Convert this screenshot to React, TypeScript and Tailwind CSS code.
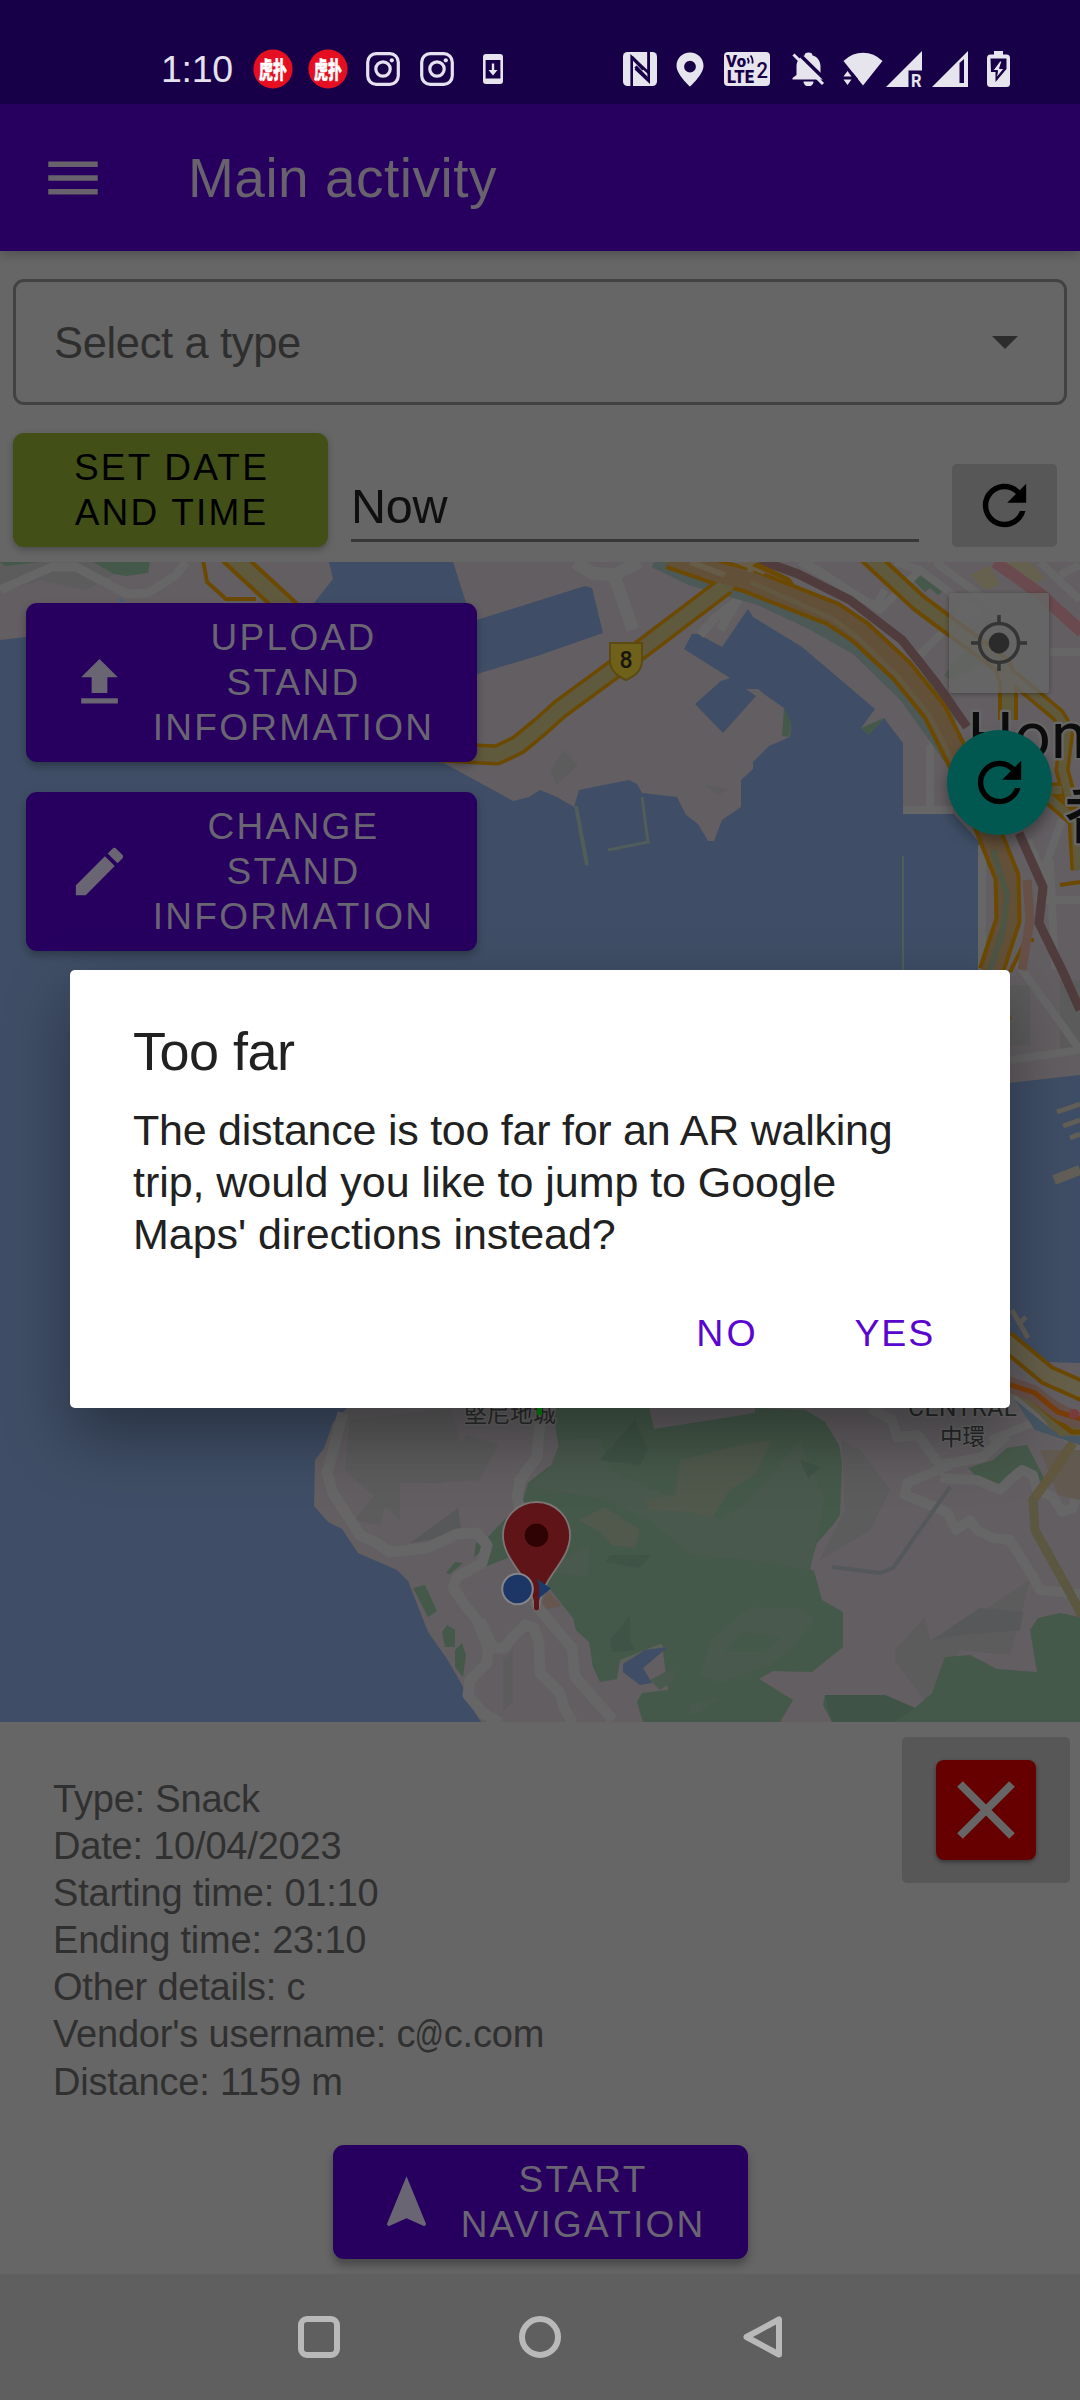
import React from "react";

const MATERIAL = {
  refresh:
    "M17.65 6.35C16.2 4.9 14.21 4 12 4c-4.42 0-7.99 3.58-7.99 8s3.57 8 7.99 8c3.73 0 6.84-2.55 7.73-6h-2.08c-.82 2.33-3.04 4-5.65 4-3.31 0-6-2.69-6-6s2.69-6 6-6c1.66 0 3.14.69 4.22 1.78L13 11h7V4l-2.35 2.35z",
  upload: "M5 20h14v-2H5v2zm0-10h4v6h6v-6h4l-7-7-7 7z",
  edit: "M3 17.25V21h3.75L17.81 9.94l-3.75-3.75L3 17.25zM20.71 7.04c.39-.39.39-1.02 0-1.41l-2.34-2.34c-.39-.39-1.02-.39-1.41 0l-1.83 1.83 3.75 3.75 1.83-1.83z",
  navigation: "M12 2L4.5 20.29l.71.71L12 18l6.79 3 .71-.71z",
  menu: "M3 18h18v-2H3v2zm0-5h18v-2H3v2zm0-7v2h18V6H3z",
};

function Glyph({ d, className }: { d: string; className: string }) {
  return (
    <svg viewBox="0 0 24 24" className={className} fill="currentColor">
      <path d={d} />
    </svg>
  );
}

function HupuBadge() {
  return (
    <svg viewBox="0 0 40 40" className="h-10 w-10 overflow-visible">
      <circle cx="20" cy="20" r="19.6" fill="#e60f22" />
      <text
        x="20"
        y="28.500"
        textAnchor="middle"
        fontSize="23"
        fontWeight="900"
        fill="#fff"
        stroke="#fff"
        strokeWidth="0.500"
        textLength="28"
        lengthAdjust="spacingAndGlyphs"
        fontFamily="Noto Sans CJK SC, sans-serif"
      >
        虎扑
      </text>
    </svg>
  );
}

function Instagram() {
  return (
    <svg viewBox="0 0 34 34" className="h-[34px] w-[34px]" fill="none" stroke="#e6e1ef" strokeWidth="3.2">
      <rect x="1.7" y="1.7" width="30.6" height="30.6" rx="8.5" />
      <circle cx="17" cy="17" r="7.2" />
      <circle cx="25.8" cy="8.3" r="2.1" fill="#e6e1ef" stroke="none" />
    </svg>
  );
}

function StatusBar() {
  const c = "#e6e4ec";
  const bg = "#180048";
  return (
    <div className="flex h-[104px] w-full shrink-0 items-center bg-[#180048] pl-[161px] pr-[70px] pt-[34px]">
      <div className="w-[92px] shrink-0 text-[37.5px] leading-[40px] tracking-[-0.3px] text-[#e6e1ef]">1:10</div>
      <div className="flex items-center">
        <HupuBadge />
        <div className="w-[15px]" />
        <HupuBadge />
        <div className="w-[18px]" />
        <Instagram />
        <div className="w-[20px]" />
        <Instagram />
        <div className="w-[29px]" />
        <svg viewBox="0 0 20 30" className="h-[30px] w-5">
          <rect width="20" height="30" rx="3" fill={c} />
          <rect x="2.6" y="6" width="14.8" height="18.5" fill={bg} />
          <path d="M8.8 9.5h2.4v6.5h3.3L10 21.5 5.500 16h3.300z" fill={c} />
        </svg>
      </div>
      <div className="ml-auto flex items-center">
        {/* NFC */}
        <svg viewBox="0 0 34 34" className="h-[34px] w-[34px]">
          <rect width="34" height="34" rx="4.500" fill={c} />
          <path d="M8.700 34V5l17 16V0" fill="none" stroke={bg} strokeWidth="2.600" />
          <path d="M25.700 0v29L12.500 16.500" fill="none" stroke={bg} strokeWidth="2.600" />
          <path d="M8.700 5L20.500 17.500M25.700 28L12.500 14.500" stroke={bg} strokeWidth="3.200" />
        </svg>
        <svg viewBox="0 0 28 35" className="ml-[19px] h-[35px] w-7">
          <path
            fillRule="evenodd"
            fill={c}
            d="M14 .500C6.500.500.500 6.200.500 13.700.500 22.500 14 34.500 14 34.500s13.500-12 13.500-20.800C27.500 6.200 21.500.500 14 .500zm0 8.300a5.900 5.900 0 110 11.800 5.900 5.900 0 010-11.800z"
          />
        </svg>
        {/* VoLTE, SIM 2 */}
        <svg viewBox="0 0 46 34" className="ml-5 h-[34px] w-[46px] overflow-visible" fontFamily="Roboto, sans-serif">
          <rect width="46" height="34" rx="4" fill={c} />
          <text x="2" y="15" fontSize="16.500" fontWeight="900" fill={bg} textLength="20" lengthAdjust="spacingAndGlyphs">
            Vo
          </text>
          <text x="3" y="30.500" fontSize="17.500" fontWeight="900" fill={bg} textLength="27" lengthAdjust="spacingAndGlyphs">
            LTE
          </text>
          <path d="M23.500 6q1.800 2.500.7 5.500M26.500 3.500q3 4 1.800 8" fill="none" stroke={bg} strokeWidth="1.800" />
          <text x="32.500" y="25.500" fontSize="22.500" fontWeight="500" fill={bg} textLength="11.500" lengthAdjust="spacingAndGlyphs">
            2
          </text>
        </svg>
        {/* Muted bell */}
        <svg viewBox="0 0 33 34" className="ml-[22px] h-[34px] w-[33px]">
          <path
            d="M4.500 23V14.500C4.500 8.500 8 4.500 12.500 3.500a4 3 0 018 0c4.500 1 8 5 8 11V23l3 3v1.500H.500V26z"
            fill={c}
          />
          <path d="M11.500 29.500h10a5 5 0 01-10 0z" fill={c} />
          <path d="M4.500-.500L34 28.500" stroke={bg} strokeWidth="3.500" />
          <path d="M1.500 2.500L31 32" stroke={c} strokeWidth="3" />
        </svg>
        {/* Wi-Fi */}
        <svg viewBox="0 0 40 34" className="ml-[18px] h-[34px] w-10">
          <path d="M.500 9Q9 .800 20 .800T39.500 9L20 33.500z" fill={c} />
          <path d="M0 20.500h9.600L15 27v7H0z" fill={bg} />
          <path d="M4.500 19l4 5.500h-8zM4.500 33l4-5.500h-8z" fill={c} />
        </svg>
        {/* Signal, roaming */}
        <svg viewBox="0 0 36 36" className="ml-[3px] h-9 w-9 overflow-visible">
          <path d="M36 0v36H0z" fill={c} />
          <path d="M22.500 19.500H36.500V36.500H22.500z" fill={bg} />
          <text x="25" y="35.500" fontSize="18" fontWeight="700" fill={c} textLength="10.500" lengthAdjust="spacingAndGlyphs" fontFamily="Roboto, sans-serif">
            R
          </text>
        </svg>
        <svg viewBox="0 0 36 36" className="ml-[10px] h-9 w-9">
          <path d="M36 0v36H0z" fill={c} />
          <path d="M32 8v24h-4.500V12z" fill={bg} />
        </svg>
        {/* Charging battery */}
        <svg viewBox="0 0 23 36" className="ml-[19px] h-9 w-[23px]">
          <path d="M7 0h9v3.500h3.500A3.500 3.500 0 0123 7v25.500a3.500 3.500 0 01-3.500 3.500h-16A3.500 3.500 0 010 32.500V7a3.500 3.500 0 013.500-3.500H7z" fill={c} />
          <path d="M3.500 7.500h16V18L8.500 31V21H4z" fill={bg} />
          <path d="M13 10L6 19.500h4.500L9.500 27 17 17.500h-4.500L15 10z" fill={c} stroke={bg} strokeWidth="1" />
        </svg>
      </div>
    </div>
  );
}

const HIGHWAY = "#6c4900";
const ROAD = "#666666";

function MapCanvas() {
  return (
    <svg viewBox="0 562 1080 1160" className="block h-[1160px] w-[1080px]">
      <rect y="562" width="1080" height="1160" fill="#3f4e66" />
      <g fill="#625e62">
        <path d="M0 562H329L333 579L314 603L130 630L26 637L0 640z" />
        <path d="M453 562L466 603L477 620L585 586L592 588L603 633L540 655L477 674L440 690L420 750L442 762L513 801L529 797L540 790L557 797L574 807L579 790L629 780L637 784L642 793L677 797L686 815L698 824L708 841L714 841L722 820L741 807V780L753 769V762L769 746L790 737L791 725L784 708L764 694L758 689H746L756 696L723 733L695 704L721 681L730 678L684 649L692 634H698L722 647L748 609L753 617L802 647L875 709L861 728L869 735L884 718L903 743V813H953L980 843V1083L1010 1083L1080 1075V562z" />
        <path d="M1080 1363L1047 1362L1010 1334L900 1300L500 1330L347 1408L333 1422L324 1448L315 1460L314 1506L328 1522L342 1529L358 1553L397 1570L408 1581L428 1632L447 1659L462 1685L475 1713L481 1722H1080z" />
      </g>

      {/* terrain relief */}
      <g fill="#5c5c5c">
        <path d="M0 562H93L114 574L86 590L40 580L0 592z" />
        <path d="M350 1420L450 1408L470 1470L440 1483H400V1520L345 1470z" />
        <path d="M468 1435L498 1445L480 1480L430 1482L456 1445z" />
        <path d="M355 1520L375 1495L388 1495L380 1525z" />
        <path d="M503 1660L513 1650V1700L503 1712z" />
        <path d="M842 1440L860 1450L890 1490L870 1530L820 1560L845 1510z" />
        <path d="M895 1650L925 1617L930 1640L970 1620L1030 1580L1010 1655L960 1650L925 1700L895 1660z" />
        <path d="M551 770L563 750L578 765L556 785zM705 785L728 789L718 795z" />
        <path d="M1010 985h20v60h-20zM1060 980h20v75h-20z" />
      </g>
      <path d="M410 1543L458 1508L461 1528L430 1540z" fill="#57585a" />
      <path d="M932 1640L980 1608L1023 1612L1020 1630L960 1635z" fill="#57585a" />

      {/* parks */}
      <g fill="#45594a">
        <path d="M548 1408L555 1423L561 1462L548 1467L528 1483L523 1500L488 1537L492 1547L485 1567L520 1553L547 1585L561 1603L573 1618L576 1630L589 1642L593 1667L600 1682L617 1679L620 1660L662 1644L668 1690L642 1693L637 1702L643 1722H780L793 1700L759 1679L773 1671L812 1672L843 1647V1612L822 1600L814 1571L809 1569L817 1543L833 1525L840 1515L842 1463L839 1445L825 1422L805 1410L755 1408V1413L654 1429L650 1412V1408z" />
        <path d="M825 1695H885L915 1708L932 1693L945 1657L970 1655L997 1669L1037 1672L1030 1630L1038 1618L1060 1613L1080 1617V1722H832L823 1705z" />
        <path d="M968 1468L993 1460L1007 1448L1027 1445L1045 1480L1037 1482L1022 1470L1000 1485L977 1477z" />
        <path d="M413 1588L425 1585L437 1611L428 1617zM442 1632L447 1625L455 1630V1647H445zM455 1650L462 1643L466 1655L463 1677L455 1667zM446 1573L455 1562L463 1563L450 1574zM476 1543h6v8l-8 6z" />
        <path d="M93 562L114 574L126 576L148 573L150 562zM0 562H40L5 566z" />
        <path d="M913 580L924 572L945 590L938 595L930 588L925 592zM784 708L791 722L789 737L782 736zM861 728L884 718L869 735z" />
        <path d="M919 668L955 700L960 715L955 722zM944 675L965 650L990 660L950 680z" opacity=".6" />
      </g>
      <g fill="#4a594e">
        <path d="M561 1440L600 1437L610 1470L680 1500L720 1520L750 1500L800 1440L825 1500L810 1570L750 1560L690 1555L650 1520L600 1498L528 1487L550 1468z" />
        <path d="M711 1640L750 1607L800 1608L815 1620L790 1650L770 1665L720 1683L700 1675z" />
        <path d="M560 1560L590 1545L587 1577L555 1573zM690 1705L720 1697L700 1712L690 1715zM650 1680L673 1668L675 1680L660 1690z" />
      </g>
      <g fill="#50594c">
        <path d="M578 1520L605 1507L640 1530L635 1548L612 1545L600 1532z" />
        <path d="M645 1500L675 1495L680 1460L740 1445L772 1440L755 1475L730 1490L712 1518L690 1512L650 1510z" />
      </g>
      <g fill="#3f5446">
        <path d="M600 1460L635 1420L648 1450L640 1465zM610 1555L650 1555L640 1568L605 1562zM610 1640L630 1615V1640L635 1650L612 1652z" />
        <path d="M825 1695H885L915 1708L895 1722H832zM800 1460L821 1467L808 1478z" />
      </g>
      <path d="M737 1637L748 1632L780 1638L765 1652L725 1652z" fill="#45594a" />
      <path d="M620 1660L660 1644L664 1647L625 1666z" fill="#5c605a" />
      <path d="M623 1664L645 1650L668 1647L643 1668L652 1683L640 1685L623 1672z" fill="#3f4e66" />
      <path d="M540 1610L547 1590L562 1606z" fill="#665650" />
      <path d="M119 600L120 598L126 603z" fill="#3f5f90" />

      {/* piers */}
      <g fill="none" stroke="#505d5a" strokeWidth="4">
        <path d="M576 806L587 865" />
        <path d="M642 797L648 842L608 850" strokeWidth="3" />
        <path d="M903 856V970" strokeWidth="2" />
      </g>
      <g stroke="#625e58" strokeWidth="5">
        <path d="M1057 1112L1080 1104M1063 1126L1080 1120M1070 1138L1080 1134M1012 1310L1028 1338M1018 1325L1026 1317" />
        <path d="M1054 1180L1080 1170" strokeWidth="10" />
      </g>

      {/* local roads */}
      <g fill="none" stroke={ROAD} strokeLinejoin="round">
        <g strokeWidth="11">
          <path d="M343 1413L327 1473L333 1493L360 1535L375 1542L390 1552L427 1548L457 1534L477 1533L487 1545L482 1563L457 1577L453 1587L463 1603L477 1620L488 1647L487 1663L470 1680L468 1695L483 1713L500 1723" />
          <path d="M480 1620L493 1648H504L512 1638L525 1625L534 1628L539 1643L540 1673L560 1693L564 1708L573 1723" />
          <path d="M533 1600L540 1610L572 1648L575 1677L613 1720" />
          <path d="M540 1423L537 1457L520 1480L517 1497L521 1515" />
        </g>
        <g strokeWidth="10">
          <path d="M870 1408L892 1420L897 1437L918 1435L940 1465L983 1457L1007 1435" />
          <path d="M950 1465L907 1483L905 1495L947 1512L956 1530L970 1520L977 1530L993 1538L1010 1540L1033 1577L1040 1590L1080 1594" />
          <path d="M940 1478L977 1480L1000 1490L1010 1480L1022 1470L1033 1475L1037 1490L1053 1497L1062 1512L1073 1508L1077 1493" />
        </g>
        <path d="M0 590L52 567H76L127 594L148 593L175 576L186 562" strokeWidth="9" />
        <path d="M575 562L592 573L614 575L633 630M614 575L640 562" strokeWidth="13" />
        <path d="M720 630L738 600L715 618L700 635" strokeWidth="9" />
        <path d="M800 562L845 588M805 562L880 610L920 570L895 562M920 570L980 615M920 655L970 605M873 610L885 590M935 562L1000 610M1040 562L1080 600M1060 575L1080 565M1050 652H1080M930 745V813M930 745L950 740" strokeWidth="8" />
        <path d="M903 810H953M982 845V970M1028 840L1045 880L1040 900L1080 900M1050 860L1055 970M1015 960L1080 1050M1040 880L1062 820M1010 1060L1080 1050" strokeWidth="8" />
        <path d="M1015 1395L1080 1450M990 1440L1040 1420" strokeWidth="8" />
      </g>
      <path d="M832 1567L880 1573L893 1568L950 1487" fill="none" stroke="#55585a" strokeWidth="4" />
      <path d="M1040 1450L1080 1450V1500L1058 1495z" fill="#625a50" />
      <path d="M1073 1443L1050 1477L1033 1500L1035 1530L1070 1593L1082 1616" fill="none" stroke="#5b5740" strokeWidth="9" />
      <path d="M1073 1443L1050 1477L1035 1497" fill="none" stroke="#62583f" strokeWidth="9" />

      {/* tinted blocks and railway lines */}
      <path d="M970 575L990 565L1000 585L985 590zM1005 562H1030L1045 578L1035 583z" fill="#66604f" />
      <path d="M995 562L1039 593L1082 632" fill="none" stroke="#6a4a4e" strokeWidth="12" />
      <path d="M654 562L691 580L760 600L809 623L857 650L905 697L950 760" fill="none" stroke="#4d5957" strokeWidth="11" />
      <path d="M760 560L798 574L850 600L902 640L936 683L967 727M1019 833L1043 887L1039 923L1063 972L1080 1010" fill="none" stroke="#503c3c" strokeWidth="9" />

      {/* expressways: dark casing with a lighter carriageway on top */}
      <g fill="none" strokeLinejoin="round">
        <g stroke={HIGHWAY} strokeWidth="21">
          <path d="M440 752L497 755L518 745L540 727L560 709L643 648L726 585" />
          <path d="M227 552L292 612" strokeWidth="23" />
          <path d="M203 560L207 582L226 599H256M240 552L257 575" strokeWidth="4" />
          <path d="M864 552L919 603L1002 665L1008 680V720" strokeWidth="20" />
          <path d="M1010 675L1058 715L1067 730L1062 770L1070 800L1085 805M1062 790H1040L1075 820L1078 870" strokeWidth="15" />
          <path d="M670 556L719 573L747 580L833 614L860 632L902 671L935 712L964 770L991 837L1007 877L1008 920L991 972" strokeWidth="27" />
          <path d="M991 970L1010 1020" strokeWidth="4" />
          <path d="M1010 972L1026 940H1034M1060 885L1080 882" strokeWidth="4" />
        </g>
        <g stroke="#5f593e" strokeWidth="14">
          <path d="M440 752L497 755L518 745L540 727L560 709L643 648L730 582" />
          <path d="M227 552L292 612" strokeWidth="15" />
          <path d="M864 552L919 603L1002 665L1008 680V720" strokeWidth="12" />
          <path d="M1010 675L1058 715L1067 730L1062 770L1070 800L1085 805M1062 790H1040L1075 820L1078 870" strokeWidth="8" />
        </g>
        <path d="M670 556L719 573L747 580L833 614L860 632L902 671L935 712L964 770L991 837L1007 877L1008 920L991 972" stroke="#635039" strokeWidth="19" />
        <path d="M750 582L833 619L857 637L898 677L929 715L958 772" stroke="#625740" strokeWidth="5" />
        <path d="M690 562L725 575M752 560L750 572M740 562L765 572" stroke="#665c48" strokeWidth="6" />
        <path d="M752 566L795 585L790 578L757 562z" fill={HIGHWAY} />
        <path d="M993 850L1007 895L1003 930L990 970" stroke="#4d5545" strokeWidth="6" />
        <path d="M1027 880L1030 920L1022 970" stroke="#665048" strokeWidth="9" />
        <path d="M1010 1390L1040 1415L1058 1438L1080 1440V1415L1055 1400L1030 1388z" fill="#5f593e" />
        <path d="M1015 1400L1035 1430L1080 1445V1436H1060z" fill="#465663" />
        <path d="M1005 1388L1030 1397L1056 1420L1072 1432H1085" stroke={HIGHWAY} strokeWidth="5" />
        <path d="M1005 1340L1047 1375L1085 1392" stroke={HIGHWAY} strokeWidth="22" />
        <path d="M1005 1340L1047 1375L1085 1392" stroke="#66604a" strokeWidth="14" />
        <path d="M1005 1383L1033 1393L1058 1412L1085 1423" stroke="#66504a" strokeWidth="16" />
        <path d="M1005 1383L1035 1393L1058 1412L1085 1420" stroke="#7a3d08" strokeWidth="5" />
        <circle cx="1074" cy="1414" r="5" fill="#7a3c3c" stroke="none" />
      </g>

      {/* route shield */}
      <path d="M610 643H642V661Q642 673 626 680Q610 673 610 661z" fill="#6f611a" stroke="#5c4a12" strokeWidth="2" />
      <text x="626" y="668" textAnchor="middle" fontSize="23" fontWeight="500" fill="#171510" fontFamily="Roboto, sans-serif">
        8
      </text>

      {/* place names */}
      <g fontFamily="Roboto, Noto Sans CJK TC, sans-serif" stroke="#666666" strokeWidth="5" paintOrder="stroke" strokeLinejoin="round">
        <text x="967.500" y="758" fontSize="65" fill="#0c0c0c">Hong</text>
        <text x="1064" y="838" fontSize="62" fill="#0c0c0c" fontWeight="500" fontFamily="Noto Sans CJK TC, sans-serif">香</text>
        <text x="464" y="1422" fontSize="23" fill="#2b2c2d" strokeWidth="3">堅尼地城</text>
        <text x="908" y="1416" fontSize="24.500" fill="#262728" strokeWidth="3" textLength="109">CENTRAL</text>
        <text x="940" y="1445" fontSize="22.500" fill="#262728" strokeWidth="3">中環</text>
      </g>
      <path d="M537 1408h5v7h-5z" fill="#008a10" />

      {/* destination pin and current location */}
      <path
        d="M536.500 1502C517.500 1502 503 1517 503 1535.500C503 1553 516 1566 525 1581C531 1591 533.500 1600 534.300 1609Q536.500 1611.500 538.700 1609C539.500 1600 542 1591 548 1581C557 1566 570 1553 570 1535.500C570 1517 555.500 1502 536.500 1502z"
        fill="#5f1517"
        stroke="#7b7577"
        strokeWidth="1.800"
      />
      <path d="M536.500 1575V1608" stroke="#5f1517" strokeWidth="5" strokeLinecap="round" />
      <circle cx="536.500" cy="1535.300" r="11.700" fill="#2f0303" />
      <path d="M537 1579L551 1588.500L538 1599Q541 1589 537 1579z" fill="#1d396a" />
      <circle cx="517.500" cy="1589" r="15.300" fill="#1c3766" stroke="#85868a" strokeWidth="2" />
    </svg>
  );
}

function MapButton({ icon, lines }: { icon: string; lines: string[] }) {
  return (
    <button className="flex h-[159px] w-[451px] items-center rounded-[11px] bg-[#27005f] pl-[42px] pr-[21px] text-[#6a6572] shadow-[0_4px_8px_rgba(0,0,0,0.28)]">
      <Glyph d={icon} className="h-[63px] w-[63px] shrink-0" />
      <span className="flex flex-1 flex-col text-center text-[37px] leading-[45px] tracking-[2.3px]">
        {lines.map((l) => (
          <span key={l}>{l}</span>
        ))}
      </span>
    </button>
  );
}

const DETAILS = [
  "Type: Snack",
  "Date: 10/04/2023",
  "Starting time: 01:10",
  "Ending time: 23:10",
  "Other details: c",
];

export default function App() {
  return (
    <div
      className="relative flex h-[2400px] w-[1080px] flex-col overflow-hidden bg-[#666666]"
      style={{ fontFamily: '"Liberation Sans", "Noto Sans CJK TC", sans-serif' }}
    >
      <StatusBar />

      <header className="z-10 flex h-[147px] shrink-0 items-center bg-[#27005f] pl-10 text-[#67626c] shadow-[0_4px_10px_rgba(0,0,0,0.2)]">
        <Glyph d={MATERIAL.menu} className="h-[66px] w-[66px]" />
        <h1 className="ml-[82px] text-[55px] leading-[66px] tracking-[0.5px]">Main activity</h1>
      </header>

      <section className="flex h-[311px] shrink-0 flex-col px-[13px] pt-7">
        <div className="flex h-[126px] items-center justify-between rounded-[11px] border-[3px] border-[#424242] pl-[38px] pr-[46px]">
          <span className="pt-0.5 text-[43.5px] leading-[52px] tracking-[-0.35px] text-[#2e2e2e]">Select a type</span>
          <svg viewBox="0 0 26 13" className="h-[13px] w-[26px]" fill="#2c2c2c">
            <path d="M0 0h26L13 13z" />
          </svg>
        </div>
        <div className="mt-7 flex h-[114px] items-end">
          <button className="flex h-[114px] w-[315px] flex-col items-center justify-center rounded-[11px] bg-[#425017] pl-0.5 text-[37px] leading-[45px] tracking-[2.2px] text-black shadow-[0_3px_7px_rgba(0,0,0,0.25)]">
            <span>SET DATE</span>
            <span>AND TIME</span>
          </button>
          <div className="mb-[5px] ml-[23px] h-[69px] w-[568px] border-b-[3px] border-[#373737] pt-[3px] text-[48.5px] leading-[60px] tracking-[-0.3px] text-[#0f0f0f]">
            Now
          </div>
          <button className="ml-[33px] flex h-[83px] w-[105px] items-center justify-center rounded-[5px] bg-[#575757] text-black">
            <Glyph d={MATERIAL.refresh} className="h-[65px] w-[65px]" />
          </button>
        </div>
      </section>

      <section className="relative h-[1160px] shrink-0 overflow-hidden">
        <MapCanvas />
        <div className="absolute left-[26px] top-[41px] flex flex-col gap-[30px]">
          <MapButton icon={MATERIAL.upload} lines={["UPLOAD", "STAND", "INFORMATION"]} />
          <MapButton icon={MATERIAL.edit} lines={["CHANGE", "STAND", "INFORMATION"]} />
        </div>
        <div className="absolute right-[28px] top-[31px] flex flex-col items-center gap-[37px]">
          <button className="mr-0.5 flex h-[100px] w-[100px] items-center justify-center rounded-[3px] bg-[#666666]/80 shadow-[0_1px_5px_rgba(0,0,0,0.3)]">
            <svg viewBox="0 0 56 56" className="h-14 w-14" fill="none" stroke="#353535" strokeWidth="3.500">
              <circle cx="28" cy="28" r="19.500" />
              <circle cx="28" cy="28" r="10.400" fill="#2b2b2b" stroke="none" />
              <path d="M28 0v8M28 48v8M0 28h8M48 28h8" />
            </svg>
          </button>
          <button className="flex h-[105px] w-[105px] items-center justify-center rounded-full bg-[#005850] text-black shadow-[0_8px_14px_rgba(0,0,0,0.35)]">
            <Glyph d={MATERIAL.refresh} className="h-[65px] w-[65px]" />
          </button>
        </div>
      </section>

      <section className="flex h-[552px] shrink-0 flex-col">
        <div className="flex h-[423px] items-start justify-between pl-[53px] pr-[10px] pt-[15px]">
          <div className="mt-[39px] flex flex-col text-[38px] leading-[47.1px] tracking-[-0.2px] text-[#303030]">
            {DETAILS.map((d) => (
              <span key={d}>{d}</span>
            ))}
            <span>
              Vendor's username: c<span className="-mx-[5px] inline-block scale-x-75">@</span>c.com
            </span>
            <span>Distance: 1159 m</span>
          </div>
          <div className="flex h-[146px] w-[168px] items-center justify-center rounded-[5px] bg-[#575757]">
            <button className="flex h-[100px] w-[100px] items-center justify-center rounded-[8px] bg-[#660000] shadow-[0_2px_4px_rgba(0,0,0,0.4)]">
              <svg viewBox="0 0 58 58" className="h-[58px] w-[58px]" stroke="#666666" strokeWidth="8">
                <path d="M3 3L55 55M55 3L3 55" />
              </svg>
            </button>
          </div>
        </div>
        <button className="ml-[333px] flex h-[114px] w-[415px] items-center rounded-[11px] bg-[#27005f] pl-[42px] pr-[20px] text-[#6a6572] shadow-[0_6px_9px_rgba(0,0,0,0.3)]">
          <Glyph d={MATERIAL.navigation} className="h-[63px] w-[63px] shrink-0" />
          <span className="flex flex-1 flex-col text-center text-[37px] leading-[45px] tracking-[2.2px]">
            <span>START</span>
            <span>NAVIGATION</span>
          </span>
        </button>
      </section>

      <nav className="flex h-[126px] shrink-0 items-center bg-[#5f5f5f] pl-[298px]">
        <svg viewBox="0 0 42 42" className="h-[42px] w-[42px]" fill="none" stroke="#b9b9b9" strokeWidth="6">
          <rect x="3" y="3" width="36" height="36" rx="6" />
        </svg>
        <svg viewBox="0 0 42 42" className="ml-[179px] h-[42px] w-[42px]" fill="none" stroke="#b9b9b9" strokeWidth="6">
          <circle cx="21" cy="21" r="18" />
        </svg>
        <svg viewBox="0 0 40 42" className="ml-[182px] h-[42px] w-10" fill="none" stroke="#b9b9b9" strokeWidth="6" strokeLinejoin="round">
          <path d="M36 3.500V38.500L3.500 21z" />
        </svg>
      </nav>

      {/* modal */}
      <div className="absolute left-[70px] top-[970px] z-20 flex h-[438px] w-[940px] flex-col rounded-[5px] bg-white px-[63px] shadow-[0_28px_64px_rgba(0,0,0,0.36)]">
        <h2 className="mt-[48px] text-[54px] leading-[66px] tracking-[-0.5px] text-[#212121]">Too far</h2>
        <p className="mt-5 text-[43px] leading-[52px] tracking-[-0.25px] text-[#212121]">
          The distance is too far for an AR walking
          <br />
          <span className="tracking-[-0.05px]">trip, would you like to jump to Google</span>
          <br />
          <span className="tracking-[-0.05px]">Maps' directions instead?</span>
        </p>
        <div className="mt-[51px] flex justify-end text-[37.5px] leading-[45px] text-[#5a06cf]">
          <button className="tracking-[3px]">NO</button>
          <button className="ml-[96px] mr-[12px] tracking-[1.8px]">YES</button>
        </div>
      </div>
    </div>
  );
}
